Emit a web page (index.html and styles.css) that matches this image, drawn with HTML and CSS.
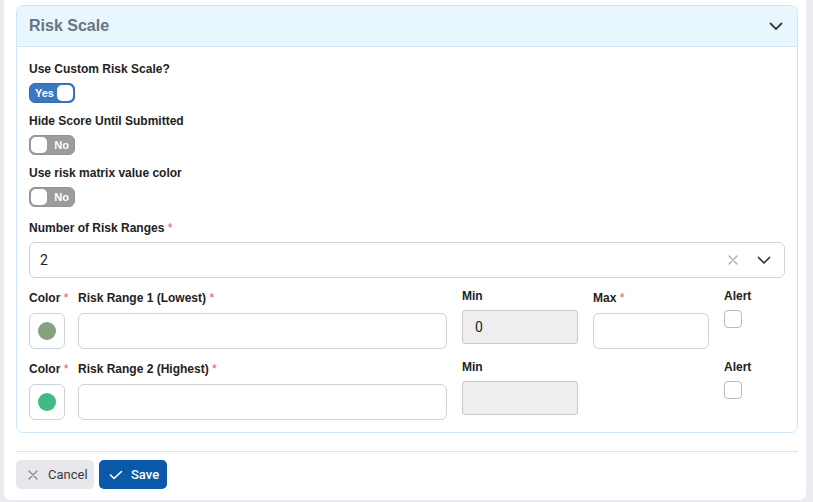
FILE: index.html
```html
<!DOCTYPE html>
<html>
<head>
<meta charset="utf-8">
<link rel="stylesheet" href="styles.css">
</head>
<body>
<div class="panel">
  <div class="card">
    <div class="card-header">
      <span class="card-title">Risk Scale</span>
      <svg class="chev" width="14" height="9" viewBox="0 0 14 9"><path d="M1.5 1.5 L7 7 L12.5 1.5" fill="none" stroke="#3c3c3c" stroke-width="1.8" stroke-linecap="round" stroke-linejoin="round"/></svg>
    </div>
    <div class="card-body">
      <div class="group">
        <div class="label">Use Custom Risk Scale?</div>
        <div class="toggle on"><span class="ttext">Yes</span><span class="knob"></span></div>
      </div>
      <div class="group">
        <div class="label">Hide Score Until Submitted</div>
        <div class="toggle off"><span class="knob"></span><span class="ttext">No</span></div>
      </div>
      <div class="group">
        <div class="label">Use risk matrix value color</div>
        <div class="toggle off"><span class="knob"></span><span class="ttext">No</span></div>
      </div>
      <div class="label sel-label">Number of Risk Ranges <span class="req">*</span></div>
      <div class="select">
        <span class="sel-val">2</span>
        <svg class="sel-x" width="10" height="10" viewBox="0 0 10 10"><path d="M1 1 L9 9 M9 1 L1 9" stroke="#a9adb5" stroke-width="1.4" stroke-linecap="round"/></svg>
        <svg class="sel-chev" width="14" height="9" viewBox="0 0 14 9"><path d="M1.5 1.5 L7 7 L12.5 1.5" fill="none" stroke="#333" stroke-width="1.7" stroke-linecap="round" stroke-linejoin="round"/></svg>
      </div>

      <div class="range-row">
        <div class="col c-color">
          <div class="label">Color <span class="req">*</span></div>
          <div class="swatch"><span class="dot dot1"></span></div>
        </div>
        <div class="col c-name">
          <div class="label">Risk Range 1 (Lowest) <span class="req">*</span></div>
          <div class="input wide"></div>
        </div>
        <div class="col c-min up">
          <div class="label">Min</div>
          <div class="input minbox">0</div>
        </div>
        <div class="col c-max">
          <div class="label">Max <span class="req">*</span></div>
          <div class="input maxbox"></div>
        </div>
        <div class="col c-alert up">
          <div class="label">Alert</div>
          <div class="check"></div>
        </div>
      </div>

      <div class="range-row">
        <div class="col c-color">
          <div class="label">Color <span class="req">*</span></div>
          <div class="swatch"><span class="dot dot2"></span></div>
        </div>
        <div class="col c-name">
          <div class="label">Risk Range 2 (Highest) <span class="req">*</span></div>
          <div class="input wide"></div>
        </div>
        <div class="col c-min up">
          <div class="label">Min</div>
          <div class="input minbox"></div>
        </div>
        <div class="col c-max"></div>
        <div class="col c-alert up">
          <div class="label">Alert</div>
          <div class="check"></div>
        </div>
      </div>
    </div>
  </div>
  <div class="divider"></div>
  <div class="actions">
    <button class="btn cancel">
      <svg width="10" height="10" viewBox="0 0 10 10"><path d="M1 1 L9 9 M9 1 L1 9" stroke="#8a8d94" stroke-width="1.4" stroke-linecap="round"/></svg>
      <span>Cancel</span>
    </button>
    <button class="btn save">
      <svg width="14" height="10" viewBox="0 0 14 10"><path d="M1.5 5 L5 8.5 L12.5 1.5" fill="none" stroke="#fff" stroke-width="1.6" stroke-linecap="round" stroke-linejoin="round"/></svg>
      <span>Save</span>
    </button>
  </div>
</div>
</body>
</html>
```
FILE: styles.css
```css
* { box-sizing: border-box; }
html, body { margin: 0; padding: 0; }
body {
  background: #ebebf0;
  font-family: "Liberation Sans", Arial, sans-serif;
  color: #222;
  width: 813px;
  height: 502px;
  overflow: hidden;
}
.panel {
  margin-left: 4px;
  width: 802px;
  height: 500px;
  background: #fff;
  border-radius: 0 0 7px 7px;
  padding: 5px 8px 0 12px;
}
.card {
  width: 782px;
  border: 1px solid #cfe5f7;
  border-radius: 7px;
  overflow: hidden;
}
.card-header {
  height: 41px;
  background: #e8f7fe;
  border-bottom: 1px solid #cfe5f7;
  display: flex;
  align-items: center;
  padding: 0 14px 0 12px;
}
.card-title {
  flex: 1;
  font-weight: bold;
  font-size: 16px;
  color: #687384;
}
.card-body {
  padding: 15px 12px 12px 12px;
}
.label {
  font-size: 12px;
  font-weight: bold;
  line-height: 14px;
  color: #222;
  white-space: nowrap;
}
.req { color: #e0545d; font-weight: normal; }
.group { margin-bottom: 11px; }
.group .label { margin-bottom: 7px; }
.toggle {
  width: 46px;
  height: 20px;
  border-radius: 6px;
  display: flex;
  align-items: center;
  padding: 0 2px;
}
.toggle.on { background: #3b78c0; border: 1px solid #336aab; justify-content: space-between; padding-left: 5px; padding-right: 1px; }
.toggle.off { background: #9c9c9c; border: 1px solid #939393; justify-content: space-between; padding-left: 1px; padding-right: 5px; }
.knob {
  width: 16px;
  height: 16px;
  background: #fff;
  border-radius: 5px;
}
.ttext {
  color: #fff;
  font-size: 11px;
  font-weight: bold;
}
.sel-label { margin-top: 14px; margin-bottom: 7px; }
.select {
  height: 36px;
  border: 1px solid #cdd1d9;
  border-radius: 6px;
  display: flex;
  align-items: center;
  padding: 0 13px 0 10px;
}
.sel-val { flex: 1; font-family: Roboto, "Liberation Sans", sans-serif; font-size: 14px; color: #222; }
.sel-x { margin-right: 19px; }
.range-row {
  display: flex;
  margin-top: 13px;
}
.range-row + .range-row { margin-top: 13px; }
.col .label { margin-bottom: 8px; }
.col.up { margin-top: -2px; }
.col.up .label { margin-bottom: 7px; }
.c-color { width: 49px; }
.c-name { width: 384px; }
.c-min { width: 131px; }
.c-max { width: 131px; }
.c-alert { width: 60px; }
.swatch {
  width: 36px;
  height: 36px;
  border: 1px solid #cdd1d9;
  border-radius: 6px;
  display: flex;
  align-items: center;
  justify-content: center;
}
.dot { width: 18px; height: 18px; border-radius: 50%; }
.dot1 { background: #86a281; }
.dot2 { background: #3fba84; }
.input {
  height: 36px;
  border: 1px solid #cdd1d9;
  border-radius: 6px;
}
.wide { width: 369px; }
.maxbox { width: 116px; }
.minbox {
  width: 116px;
  height: 34px;
  background: #eeeeee;
  border-color: #c9c9c9;
  border-radius: 3px;
  font-family: Roboto, "Liberation Sans", sans-serif;
  font-size: 14px;
  display: flex;
  align-items: center;
  padding-left: 12px;
  color: #222;
}
.check {
  width: 18px;
  height: 18px;
  border: 1px solid #b6bac2;
  border-radius: 4px;
}
.divider {
  margin-top: 18px;
  margin-left: 0;
  width: 782px;
  height: 1px;
  background: #e2e3e6;
}
.actions {
  display: flex;
  gap: 5px;
  margin-top: 8px;
}
.btn {
  height: 29px;
  border: none;
  border-radius: 5px;
  display: flex;
  align-items: center;
  font-family: Roboto, "Liberation Sans", sans-serif;
  font-size: 13px;
  padding: 0;
}
.btn.cancel {
  width: 78px;
  background: #e7e7ec;
  color: #3a3a3a;
  padding-left: 12px;
  gap: 10px;
}
.btn.save {
  width: 68px;
  background: #0b5aa9;
  color: #fff;
  font-weight: 500;
  padding-left: 10px;
  gap: 8px;
}
```
